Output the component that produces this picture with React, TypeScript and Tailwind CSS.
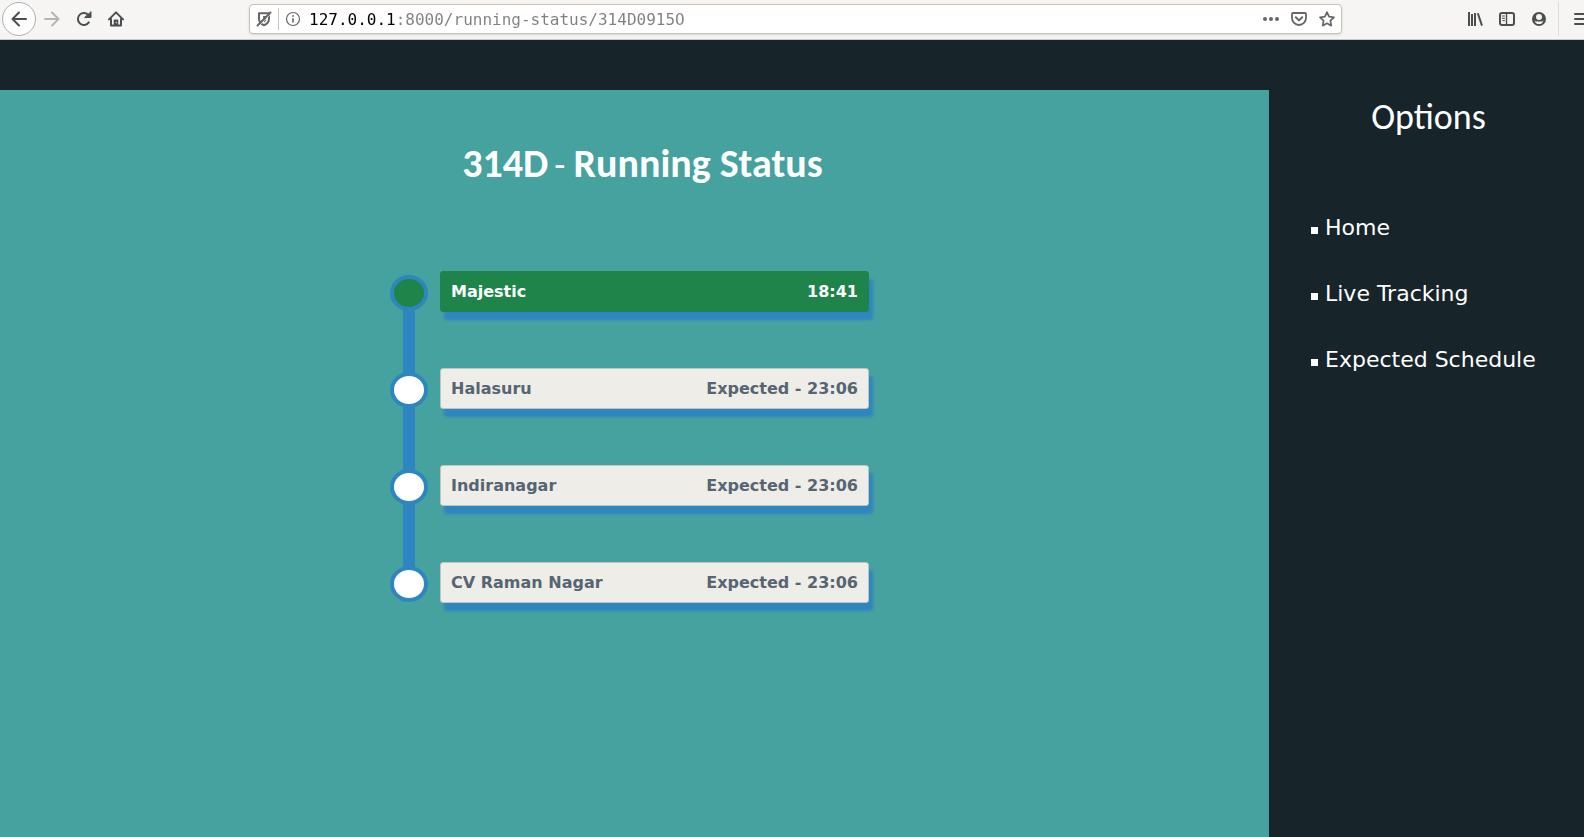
import type { ReactNode } from "react";

type Stop = { name: string; time: string; reached: boolean };

const stops: Stop[] = [
  { name: "Majestic", time: "18:41", reached: true },
  { name: "Halasuru", time: "Expected - 23:06", reached: false },
  { name: "Indiranagar", time: "Expected - 23:06", reached: false },
  { name: "CV Raman Nagar", time: "Expected - 23:06", reached: false },
];

const options = ["Home", "Live Tracking", "Expected Schedule"];

function Glyph({ children }: { children: ReactNode }) {
  return (
    <svg
      viewBox="0 0 16 16"
      className="size-4 shrink-0"
      fill="none"
      stroke="currentColor"
      strokeWidth="2"
      strokeLinecap="round"
      strokeLinejoin="round"
      aria-hidden="true"
    >
      {children}
    </svg>
  );
}

function IconButton({ label, className = "", children }: { label: string; className?: string; children: ReactNode }) {
  return (
    <button type="button" aria-label={label} className={`flex h-8 shrink-0 items-center justify-center ${className}`}>
      <Glyph>{children}</Glyph>
    </button>
  );
}

function BrowserBar() {
  return (
    <header className="flex h-10 items-center overflow-hidden border-b border-[#c8c8c6] bg-[#f6f5f4] pb-px pl-0.5 text-[#4a4f50]">
      <button
        type="button"
        aria-label="Back"
        className="flex size-[34px] shrink-0 items-center justify-center rounded-full border border-[#b0b0ae] bg-[#fdfdfd]"
      >
        <Glyph>
          <path d="M15 8H1.5M8 1.5L1.5 8L8 14.5" />
        </Glyph>
      </button>
      <IconButton label="Forward" className="w-8 text-[#b4b5b4]">
        <path d="M1 8H14.5M8 1.5L14.5 8L8 14.5" />
      </IconButton>
      <IconButton label="Reload" className="w-8">
        <path d="M12.8 11.4A6 6 0 1 1 12.6 4.2" />
        <path d="M9 6.5H15V1Z" fill="currentColor" strokeWidth="1" />
      </IconButton>
      <IconButton label="Home" className="w-8">
        <path d="M1 8.4L8 1.4L15 8.4M3 8V14.6H13V8" />
        <path d="M6.5 14.5V9.3H9.5V14.5" strokeWidth="1.6" fill="currentColor" />
        <path d="M8.3 11.2V11.8" stroke="#f6f5f4" strokeWidth="1" />
      </IconButton>

      <div className="ml-[117px] flex h-[30px] min-w-0 flex-1 items-center rounded border border-[#c9c2ba] bg-white text-[#666666] shadow-sm">
        <IconButton label="Tracking protection" className="w-7">
          <path d="M3 2.2H13V7.5C13 11 11 13.2 8 14.2C5 13.2 3 11 3 7.5Z" />
          <path d="M7 5H10.3V7.5C10.3 9.5 9.5 10.7 8 11.5Z" fill="currentColor" stroke="none" />
          <path d="M2.6 15.1L15.2 2.5" stroke="white" strokeWidth="1" />
          <path d="M1.5 14.5L14.5 1.5" />
        </IconButton>
        <span className="h-[22px] w-px shrink-0 bg-[#c9c2ba]" />
        <IconButton label="Site information" className="w-7">
          <circle cx="8" cy="8" r="6.5" strokeWidth="1.2" />
          <path d="M8 7.8V11" strokeWidth="1.6" />
          <path d="M8 4.9V5" strokeWidth="1.8" />
        </IconButton>
        <input
          aria-label="Address"
          type="text"
          spellCheck={false}
          defaultValue="127.0.0.1:8000/running-status/314D0915O"
          className="ml-0.5 h-7 min-w-0 flex-1 bg-[linear-gradient(to_right,#000000_87px,#808080_87px)] bg-clip-text font-['DejaVu_Sans_Mono',monospace] text-base text-transparent caret-black outline-none"
        />
        <IconButton label="Page actions" className="w-7">
          <g fill="currentColor" stroke="none">
            <circle cx="2" cy="8" r="2" />
            <circle cx="8" cy="8" r="2" />
            <circle cx="14" cy="8" r="2" />
          </g>
        </IconButton>
        <IconButton label="Save to Pocket" className="w-7">
          <path d="M2 2H14A1 1 0 0 1 15 3V7A7 7 0 0 1 1 7V3A1 1 0 0 1 2 2Z" strokeWidth="1.8" />
          <path d="M4.8 6.3L8 9.4L11.2 6.3" />
        </IconButton>
        <IconButton label="Bookmark this page" className="w-7">
          <path d="M8 1.2L10.1 5.7L15 6.3L11.4 9.7L12.3 14.7L8 12.3L3.7 14.7L4.6 9.7L1 6.3L5.9 5.7Z" strokeWidth="1.7" />
        </IconButton>
      </div>

      <div className="ml-[117px] flex shrink-0 items-center">
        <IconButton label="Library" className="w-8">
          <path d="M2 1V15M5 3V15M8 2V15M10.8 2.2L15 14.6" strokeLinecap="butt" strokeWidth="2" />
        </IconButton>
        <IconButton label="Sidebar" className="w-8">
          <rect x="1" y="2" width="14" height="12" rx="2" />
          <path d="M7.5 2V14" strokeWidth="1.4" />
          <path d="M3.3 5H5.5M3.3 7.3H5.5M3.8 9.6H5.5" strokeWidth="1" />
        </IconButton>
        <IconButton label="Account" className="w-8">
          <circle cx="8" cy="8" r="7" fill="currentColor" stroke="none" />
          <circle cx="8" cy="6" r="3" fill="#f6f5f4" stroke="none" />
          <path d="M3.6 9.4C4.2 10.6 6 10.5 8 10.5S11.8 10.6 12.4 9.4C12 11.8 10.2 13 8 13S4 11.8 3.6 9.4Z" fill="#f6f5f4" stroke="none" />
        </IconButton>
        <span className="ml-[3px] h-[34px] w-px bg-[#dcdad8]" />
        <div className="ml-[15px] w-2.5 overflow-hidden">
          <IconButton label="Open menu" className="w-4">
            <path d="M1 3H15M1 8H15M1 13H15" />
          </IconButton>
        </div>
      </div>
    </header>
  );
}

function TimelineStop({ stop, last }: { stop: Stop; last: boolean }) {
  return (
    <li className="flex gap-3">
      <div className="flex w-[38px] shrink-0 flex-col items-center">
        <span
          className={`z-10 h-9 w-full shrink-0 rounded-[50%] border-4 border-[#2e86c1] ${
            stop.reached ? "bg-[#1e8449]" : "bg-white"
          }`}
        />
        {!last && <span className="-my-1 w-3 flex-1 bg-[#2e86c1]" />}
      </div>
      <div className={`-mt-1 flex-1 ${last ? "" : "pb-[60px]"}`}>
        <div
          className={`flex h-[41px] items-center justify-between rounded-[3px] border px-2.5 text-base font-bold shadow-[4px_8px_3px_0px_#2e86c1] ${
            stop.reached ? "border-[#1e8449] bg-[#1e8449] text-white" : "border-[#c4c2bd] bg-[#eeede7] text-[#566573]"
          }`}
        >
          <span>{stop.name}</span>
          <span>{stop.time}</span>
        </div>
      </div>
    </li>
  );
}

export default function App() {
  return (
    <div className="flex min-h-screen flex-col bg-[#17252a] font-['DejaVu_Sans',sans-serif]">
      <BrowserBar />
      <div className="flex flex-1 pt-[50px]">
        <main className="flex min-w-0 flex-1 flex-col items-center bg-[#45a29e]">
          <h1 className="mt-[50px] pl-4 font-['Carlito','Lato',sans-serif] text-[40px] leading-[48px] font-bold text-white">
            314D<span className="ml-1.5 text-4xl font-normal">- </span>Running Status
          </h1>
          <ol className="mt-[87px] mr-2.5 w-[479px] max-w-full">
            {stops.map((stop, i) => (
              <TimelineStop key={stop.name} stop={stop} last={i === stops.length - 1} />
            ))}
          </ol>
        </main>
        <aside className="w-[315px] shrink-0 text-white">
          <h2 className="mt-[3px] pl-1 text-center font-['Carlito','Lato',sans-serif] text-4xl leading-[48px]">Options</h2>
          <nav aria-label="Options" className="mt-[71px] pl-[42px]">
            <ul className="flex flex-col gap-[34px]">
              {options.map((label) => (
                <li key={label} className="flex h-8 items-center gap-[7px]">
                  <span className="mt-1 size-[7px] bg-white" />
                  <a href="#" className="text-[22px] leading-8">
                    {label}
                  </a>
                </li>
              ))}
            </ul>
          </nav>
        </aside>
      </div>
    </div>
  );
}
